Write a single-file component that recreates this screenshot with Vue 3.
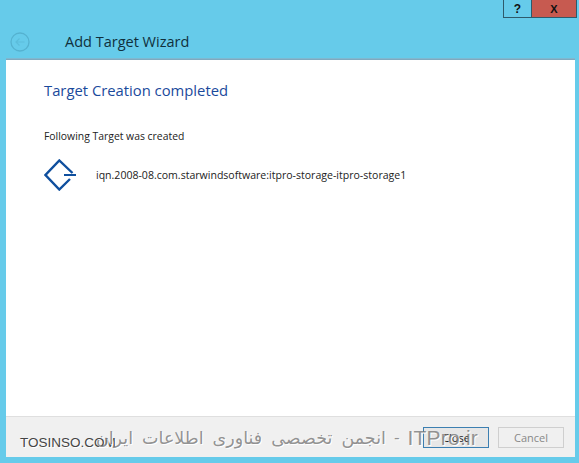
<script setup>
const targetName = 'iqn.2008-08.com.starwindsoftware:itpro-storage-itpro-storage1'
</script>

<template>
  <div class="window">
    <div class="caption-buttons">
      <div class="cap-btn help">?</div>
      <div class="cap-btn close-x">X</div>
    </div>

    <div class="title-bar">
      <div class="back-btn">
        <svg width="20" height="20" viewBox="0 0 20 20">
          <circle cx="10" cy="10" r="9" fill="none" stroke="#55b2d0" stroke-width="1.3" />
          <path d="M14.5 10H6M9.5 6.5 6 10l3.5 3.5" fill="none" stroke="#5cbddb" stroke-width="1.2" />
        </svg>
      </div>
      <span class="title">Add Target Wizard</span>
    </div>

    <div class="panel">
      <div class="content">
        <h1 class="heading">Target Creation completed</h1>
        <p class="subtext">Following Target was created</p>
        <div class="target-row">
          <svg class="target-icon" width="34" height="32" viewBox="0 0 34 32">
            <path d="M28.5 14 15.3 1.5 1.5 16l13.8 14.5L26 20" fill="none" stroke="#0f4f9e" stroke-width="2.4" />
            <path d="M20 16H32" fill="none" stroke="#0f4f9e" stroke-width="2" />
          </svg>
          <span class="target-name">{{ targetName }}</span>
        </div>
      </div>

      <div class="footer">
        <button class="btn btn-primary">Close</button>
        <button class="btn btn-disabled">Cancel</button>
      </div>
    </div>

    <div class="watermark">
      <span class="wm-site">TOSINSO.COM</span>
      <div class="wm-fa" dir="rtl">
        <span class="wm-latin" dir="ltr">ITPro.ir</span>
        <span class="wm-dash">-</span>
        <span class="wm-text">انجمن تخصصی فناوری اطلاعات ایران</span>
      </div>
    </div>
  </div>
</template>

<style>
html, body {
  margin: 0;
  background: #66cbea;
}
</style>

<style scoped>
.window {
  position: relative;
  width: 579px;
  height: 463px;
  overflow: hidden;
  background: #66cbea;
  font-family: "Open Sans", "Noto Sans", sans-serif;
  display: flex;
  flex-direction: column;
  box-sizing: border-box;
  padding: 0 4px 6px 6px;
}

.caption-buttons {
  position: absolute;
  top: 0;
  right: 2px;
  display: flex;
}

.cap-btn {
  height: 18px;
  display: flex;
  align-items: center;
  justify-content: center;
  box-sizing: border-box;
  border: 1px solid #2e5a6b;
  border-top: none;
  font-family: "Liberation Sans", sans-serif;
  font-weight: 700;
  color: #111;
}

.help {
  width: 28px;
  font-size: 12px;
  border-right: none;
}

.close-x {
  width: 46px;
  font-size: 11px;
  background: #c75a50;
}

.title-bar {
  height: 59px;
  display: flex;
  align-items: center;
  padding-top: 24px;
  box-sizing: border-box;
  flex-shrink: 0;
}

.back-btn {
  width: 20px;
  height: 20px;
  margin-left: 4px;
}

.title {
  margin-left: 35px;
  font-size: 14.5px;
  color: #10303c;
}

.panel {
  flex: 1;
  display: flex;
  flex-direction: column;
  background: #fff;
  border-top: 1px solid #7fa9bf;
  box-shadow: 0 -1px 0 #7fb8d0;
}

.content {
  flex: 1;
  padding: 20px 0 0 38px;
}

.heading {
  margin: 0;
  font-size: 14.8px;
  line-height: 20px;
  font-weight: 400;
  color: #1a4a9c;
}

.subtext {
  margin: 29px 0 0;
  font-size: 10.4px;
  line-height: 14px;
  color: #222;
}

.target-row {
  display: flex;
  align-items: center;
  margin-top: 16px;
}

.target-icon {
  flex-shrink: 0;
}

.target-name {
  margin-left: 18px;
  font-size: 10.55px;
  color: #222;
}

.footer {
  height: 41px;
  box-sizing: border-box;
  display: flex;
  align-items: center;
  justify-content: flex-end;
  gap: 9px;
  padding: 0 11px 0 0;
  background: #f0f0f0;
  border-top: 1px solid #dfdfdf;
}

.btn {
  width: 66px;
  height: 21px;
  padding: 0;
  font-family: "Open Sans", "Noto Sans", sans-serif;
  font-size: 11px;
  background: #e7e7e7;
}

.btn-primary {
  border: 1px solid #3c7fb1;
  color: #222;
}

.btn-disabled {
  border: 1px solid #cfcfcf;
  background: #f0f0f0;
  color: #888;
}

.watermark {
  position: absolute;
  left: 20px;
  top: 423px;
  width: 458px;
  height: 30px;
  pointer-events: none;
}

.wm-site {
  position: absolute;
  left: 0;
  top: 12px;
  font-family: "Liberation Sans", sans-serif;
  font-size: 13.5px;
  color: #444;
  text-shadow: 1px 1px 0 #fff;
}

.wm-fa {
  position: absolute;
  right: 0;
  top: 0;
  display: flex;
  align-items: center;
  height: 30px;
  white-space: nowrap;
  color: rgba(120, 120, 120, 0.8);
  text-shadow: 1px 1px 0 #fff;
}

.wm-latin {
  font-family: "Liberation Sans", sans-serif;
  font-size: 21px;
  letter-spacing: 0.2px;
}

.wm-dash {
  margin: 0 8px;
  font-family: "Liberation Sans", sans-serif;
  font-size: 17px;
}

.wm-text {
  font-family: "DejaVu Sans", sans-serif;
  font-size: 17.5px;
  word-spacing: 3.5px;
}
</style>
